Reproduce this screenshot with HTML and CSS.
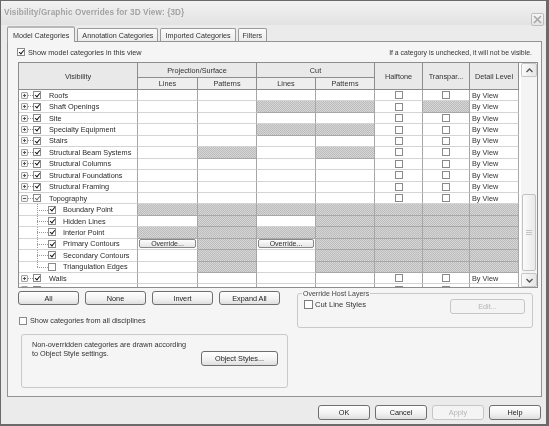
FILE: index.html
```html
<!DOCTYPE html>
<html>
<head>
<meta charset="utf-8">
<link rel="stylesheet" href="styles.css">
</head>
<body>
<div class="window">
  <div class="titlebar">
    <span class="title">Visibility/Graphic Overrides for 3D View: {3D}</span>
    <span class="close"><svg width="9" height="9" viewBox="0 0 9 9"><path d="M1 1L8 8M8 1L1 8" stroke="#a8a8a8" stroke-width="1.6"/></svg></span>
  </div>
  <div class="client">
    <div class="tabs">
      <span class="tab active">Model Categories</span>
      <span class="tab">Annotation Categories</span>
      <span class="tab">Imported Categories</span>
      <span class="tab">Filters</span>
    </div>
    <div class="panel">
      <div class="toprow">
        <label class="chk"><span class="cb on"></span>Show model categories in this view</label>
        <span class="hint">If a category is unchecked, it will not be visible.</span>
      </div>
      <div class="gridbox">
        <div class="grid">
          <div class="hd hv">Visibility</div>
          <div class="hd hps">Projection/Surface</div>
          <div class="hd hcut">Cut</div>
          <div class="hd hv6">Halftone</div>
          <div class="hd hv7">Transpar...</div>
          <div class="hd hv8">Detail Level</div>
          <div class="hd h2">Lines</div>
          <div class="hd h2">Patterns</div>
          <div class="hd h2">Lines</div>
          <div class="hd h2">Patterns</div>

          <div class="c vis"><span class="exp plus"></span><span class="hl"></span><span class="cb on"></span><span class="lbl">Roofs</span></div>
          <div class="c"></div><div class="c"></div><div class="c"></div><div class="c"></div>
          <div class="c ctr"><span class="cb"></span></div><div class="c ctr"><span class="cb"></span></div><div class="c dl">By View</div>

          <div class="c vis"><span class="exp plus"></span><span class="hl"></span><span class="cb on"></span><span class="lbl">Shaft Openings</span></div>
          <div class="c"></div><div class="c"></div><div class="c h"></div><div class="c h"></div>
          <div class="c ctr"><span class="cb"></span></div><div class="c h"></div><div class="c dl">By View</div>

          <div class="c vis"><span class="exp plus"></span><span class="hl"></span><span class="cb on"></span><span class="lbl">Site</span></div>
          <div class="c"></div><div class="c"></div><div class="c"></div><div class="c"></div>
          <div class="c ctr"><span class="cb"></span></div><div class="c ctr"><span class="cb"></span></div><div class="c dl">By View</div>

          <div class="c vis"><span class="exp plus"></span><span class="hl"></span><span class="cb on"></span><span class="lbl">Specialty Equipment</span></div>
          <div class="c"></div><div class="c"></div><div class="c h"></div><div class="c h"></div>
          <div class="c ctr"><span class="cb"></span></div><div class="c ctr"><span class="cb"></span></div><div class="c dl">By View</div>

          <div class="c vis"><span class="exp plus"></span><span class="hl"></span><span class="cb on"></span><span class="lbl">Stairs</span></div>
          <div class="c"></div><div class="c"></div><div class="c"></div><div class="c"></div>
          <div class="c ctr"><span class="cb"></span></div><div class="c ctr"><span class="cb"></span></div><div class="c dl">By View</div>

          <div class="c vis"><span class="exp plus"></span><span class="hl"></span><span class="cb on"></span><span class="lbl">Structural Beam Systems</span></div>
          <div class="c"></div><div class="c h"></div><div class="c"></div><div class="c h"></div>
          <div class="c ctr"><span class="cb"></span></div><div class="c ctr"><span class="cb"></span></div><div class="c dl">By View</div>

          <div class="c vis"><span class="exp plus"></span><span class="hl"></span><span class="cb on"></span><span class="lbl">Structural Columns</span></div>
          <div class="c"></div><div class="c"></div><div class="c"></div><div class="c"></div>
          <div class="c ctr"><span class="cb"></span></div><div class="c ctr"><span class="cb"></span></div><div class="c dl">By View</div>

          <div class="c vis"><span class="exp plus"></span><span class="hl"></span><span class="cb on"></span><span class="lbl">Structural Foundations</span></div>
          <div class="c"></div><div class="c"></div><div class="c"></div><div class="c"></div>
          <div class="c ctr"><span class="cb"></span></div><div class="c ctr"><span class="cb"></span></div><div class="c dl">By View</div>

          <div class="c vis"><span class="exp plus"></span><span class="hl"></span><span class="cb on"></span><span class="lbl">Structural Framing</span></div>
          <div class="c"></div><div class="c"></div><div class="c"></div><div class="c"></div>
          <div class="c ctr"><span class="cb"></span></div><div class="c ctr"><span class="cb"></span></div><div class="c dl">By View</div>

          <div class="c vis"><span class="exp"></span><span class="hl"></span><span class="cb on dim"></span><span class="lbl">Topography</span></div>
          <div class="c"></div><div class="c"></div><div class="c"></div><div class="c"></div>
          <div class="c ctr"><span class="cb"></span></div><div class="c ctr"><span class="cb"></span></div><div class="c dl">By View</div>

          <div class="c vis sub"><span class="tree"></span><span class="cb on"></span><span class="lbl">Boundary Point</span></div>
          <div class="c h"></div><div class="c h"></div><div class="c h"></div><div class="c h"></div>
          <div class="c h"></div><div class="c h"></div><div class="c h"></div>

          <div class="c vis sub"><span class="tree"></span><span class="cb on"></span><span class="lbl">Hidden Lines</span></div>
          <div class="c"></div><div class="c h"></div><div class="c"></div><div class="c h"></div>
          <div class="c h"></div><div class="c h"></div><div class="c h"></div>

          <div class="c vis sub"><span class="tree"></span><span class="cb on"></span><span class="lbl">Interior Point</span></div>
          <div class="c h"></div><div class="c h"></div><div class="c h"></div><div class="c h"></div>
          <div class="c h"></div><div class="c h"></div><div class="c h"></div>

          <div class="c vis sub"><span class="tree"></span><span class="cb on"></span><span class="lbl">Primary Contours</span></div>
          <div class="c ob"><span class="obtn">Override...</span></div><div class="c h"></div><div class="c ob"><span class="obtn">Override...</span></div><div class="c h"></div>
          <div class="c h"></div><div class="c h"></div><div class="c h"></div>

          <div class="c vis sub"><span class="tree"></span><span class="cb on"></span><span class="lbl">Secondary Contours</span></div>
          <div class="c"></div><div class="c h"></div><div class="c"></div><div class="c h"></div>
          <div class="c h"></div><div class="c h"></div><div class="c h"></div>

          <div class="c vis sub last"><span class="tree"></span><span class="cb"></span><span class="lbl">Triangulation Edges</span></div>
          <div class="c"></div><div class="c h"></div><div class="c"></div><div class="c h"></div>
          <div class="c h"></div><div class="c h"></div><div class="c h"></div>

          <div class="c vis"><span class="exp plus"></span><span class="hl"></span><span class="cb on"></span><span class="lbl">Walls</span></div>
          <div class="c"></div><div class="c"></div><div class="c"></div><div class="c"></div>
          <div class="c ctr"><span class="cb"></span></div><div class="c ctr"><span class="cb"></span></div><div class="c dl">By View</div>

          <div class="c vis"><span class="exp plus"></span><span class="hl"></span><span class="cb on"></span></div>
          <div class="c"></div><div class="c"></div><div class="c"></div><div class="c"></div>
          <div class="c ctr"><span class="cb"></span></div><div class="c ctr"><span class="cb"></span></div><div class="c dl"></div>
        </div>
        <div class="scroll">
          <span class="sbtn"><svg width="7" height="5" viewBox="0 0 7 5"><path d="M0.5 4L3.5 1L6.5 4" fill="none" stroke="#555" stroke-width="1.4"/></svg></span>
          <div class="track"><span class="thumb"><span class="grip"></span></span></div>
          <span class="sbtn"><svg width="7" height="5" viewBox="0 0 7 5"><path d="M0.5 1L3.5 4L6.5 1" fill="none" stroke="#555" stroke-width="1.4"/></svg></span>
        </div>
      </div>
      <div class="lower">
        <div class="leftcol">
          <div class="btnrow">
            <button class="btn">All</button>
            <button class="btn">None</button>
            <button class="btn">Invert</button>
            <button class="btn">Expand All</button>
          </div>
          <label class="chk disc"><span class="cb"></span>Show categories from all disciplines</label>
          <div class="note">
            <p>Non-overridden categories are drawn according<br>to Object Style settings.</p>
            <button class="btn obj">Object Styles...</button>
          </div>
        </div>
        <fieldset class="host">
          <legend>Override Host Layers</legend>
          <div class="hostrow">
            <label class="chk cls"><span class="cb big"></span>Cut Line Styles</label>
            <button class="btn edit" disabled>Edit...</button>
          </div>
        </fieldset>
      </div>
    </div>
    <div class="footer">
      <button class="btn fb">OK</button>
      <button class="btn fb">Cancel</button>
      <button class="btn fb" disabled>Apply</button>
      <button class="btn fb">Help</button>
    </div>
  </div>
</div>
</body>
</html>
```
FILE: styles.css
```css
html, body {
  margin: 0;
  padding: 0;
  width: 549px;
  height: 426px;
  overflow: hidden;
  background: #d8d8d8;
  font-family: "Liberation Sans", Arial, sans-serif;
  font-size: 7.3px;
  color: #2a2a2a;
}

.window {
  box-sizing: border-box;
  width: 549px;
  height: 426px;
  border: 1px solid #6a6a6a;
  border-right-width: 3px;
  border-bottom-width: 2px;
  background: #ebebeb;
  display: flex;
  flex-direction: column;
  filter: grayscale(1);
}

.titlebar {
  height: 24px;
  flex: none;
  display: flex;
  align-items: flex-start;
  justify-content: space-between;
  padding: 0 2px 0 3px;
  background: linear-gradient(#f2f2f2, #e2e2e2);
}

.title {
  margin-top: 7px;
  font-size: 8.2px;
  font-weight: bold;
  color: #a3a3a3;
  letter-spacing: 0.1px;
}

.close {
  margin-top: 12px;
  width: 13px;
  height: 13px;
  box-sizing: border-box;
  border: 1px solid #bdbdbd;
  border-radius: 2px;
  background: linear-gradient(#f7f7f7, #e4e4e4);
  display: flex;
  align-items: center;
  justify-content: center;
}

.client {
  flex: 1;
  display: flex;
  flex-direction: column;
  padding: 1px 4px 0 6px;
}

.tabs {
  display: flex;
  align-items: flex-end;
  height: 15px;
  gap: 2px;
  position: relative;
  z-index: 1;
}

.tab {
  height: 13px;
  box-sizing: border-box;
  padding: 0 4px;
  border: 1px solid #9a9a9a;
  border-bottom: none;
  border-radius: 2px 2px 0 0;
  background: linear-gradient(#fbfbfb, #ececec);
  display: flex;
  align-items: center;
  font-size: 7.2px;
  color: #333;
}

.tab.active {
  height: 16px;
  margin-bottom: -1px;
  background: #f5f5f5;
  padding: 0 5px;
  border-top: 2px solid #b8b8b8;
}

.panel {
  box-sizing: border-box;
  height: 356px;
  border: 1px solid #939393;
  background: #f5f5f5;
  padding: 4px 3px 0 10px;
}

.toprow {
  display: flex;
  justify-content: space-between;
  align-items: center;
  height: 12px;
  padding-right: 6px;
}

.chk {
  display: flex;
  align-items: center;
  gap: 3px;
  color: #333;
}

.toprow .chk {
  margin-left: -1px;
}

.hint {
  font-size: 6.9px;
  color: #333;
}

.cb {
  display: inline-block;
  position: relative;
  flex: none;
  width: 8px;
  height: 8px;
  box-sizing: border-box;
  border: 1px solid #8a8a8a;
  background: #fff;
}

.cb.on::after {
  content: "";
  position: absolute;
  left: 1.6px;
  top: -0.4px;
  width: 1.8px;
  height: 4px;
  border: solid #111;
  border-width: 0 1.6px 1.6px 0;
  transform: rotate(40deg);
}

.cb.dim::after {
  border-color: #6a6a6a;
}

.cb.big {
  width: 9px;
  height: 9px;
  border-color: #7c7c7c;
}

.gridbox {
  margin-top: 4px;
  width: 520px;
  height: 226px;
  box-sizing: border-box;
  border: 1px solid #8d8d8d;
  background: #fff;
  display: flex;
  gap: 2px;
  overflow: hidden;
}

.grid {
  width: 500px;
  flex: none;
  display: grid;
  grid-template-columns: 119px 60px 59px 59px 59px 48px 47px 49px;
  grid-template-rows: 15px 12px;
  grid-auto-rows: 11.45px;
  align-content: start;
}

.hd {
  box-sizing: border-box;
  border-right: 1px solid #8d8d8d;
  border-bottom: 1px solid #8d8d8d;
  background: #e9e9e9;
  display: flex;
  align-items: center;
  justify-content: center;
  color: #333;
}

.hv { grid-column: 1; grid-row: 1 / 3; }
.hps { grid-column: 2 / 4; grid-row: 1; }
.hcut { grid-column: 4 / 6; grid-row: 1; }
.hv6 { grid-column: 6; grid-row: 1 / 3; }
.hv7 { grid-column: 7; grid-row: 1 / 3; }
.hv8 { grid-column: 8; grid-row: 1 / 3; }
.h2 { background: #eeeeee; }

.c {
  box-sizing: border-box;
  border-right: 1px solid #a6a6a6;
  border-bottom: 1px solid #d4d4d4;
  background: #fff;
  min-height: 0;
  overflow: hidden;
}

.c.h {
  background: repeating-conic-gradient(#bcbcbc 0 25%, #d6d6d6 0 50%) 0 0 / 2px 2px;
  border-bottom-color: #a8a8a8;
}

.vis {
  display: flex;
  align-items: center;
  padding-left: 2px;
}

.exp {
  flex: none;
  position: relative;
  width: 7px;
  height: 7px;
  box-sizing: border-box;
  border: 1px solid #a4a4a4;
  border-radius: 1px;
  background: #f3f3f3;
}

.exp::before {
  content: "";
  position: absolute;
  left: 1px;
  right: 1px;
  top: 2px;
  height: 1px;
  background: #555;
}

.exp.plus::after {
  content: "";
  position: absolute;
  top: 1px;
  bottom: 1px;
  left: 2px;
  width: 1px;
  background: #555;
}

.hl {
  flex: none;
  width: 5px;
  height: 1px;
  background: repeating-linear-gradient(to right, #999 0 1px, transparent 1px 2px);
}

.lbl {
  margin-left: 8px;
  white-space: nowrap;
  color: #2a2a2a;
}

.vis.sub {
  padding-left: 18px;
}

.tree {
  flex: none;
  align-self: stretch;
  width: 11px;
  background:
    repeating-linear-gradient(to bottom, #999 0 1px, transparent 1px 2px) 0 0 / 1px 100% no-repeat,
    repeating-linear-gradient(to right, #999 0 1px, transparent 1px 2px) 0 50% / 100% 1px no-repeat;
  margin-bottom: -1px;
}

.vis.last .tree {
  background:
    repeating-linear-gradient(to bottom, #999 0 1px, transparent 1px 2px) 0 0 / 1px 50% no-repeat,
    repeating-linear-gradient(to right, #999 0 1px, transparent 1px 2px) 0 50% / 100% 1px no-repeat;
}

.vis.sub .lbl {
  margin-left: 7px;
}

.ctr {
  display: flex;
  align-items: center;
  justify-content: center;
}

.dl {
  display: flex;
  align-items: center;
  padding-left: 2px;
  color: #333;
}

.ob {
  display: flex;
  align-items: center;
  padding: 0 1px;
}

.obtn {
  flex: 1;
  height: 9px;
  box-sizing: border-box;
  border: 1px solid #888;
  border-radius: 2px;
  background: linear-gradient(#fdfdfd, #e4e4e4);
  display: flex;
  align-items: center;
  justify-content: center;
  font-size: 7px;
  color: #333;
}

.scroll {
  width: 16px;
  flex: none;
  display: flex;
  flex-direction: column;
  background: #f4f4f4;
}

.sbtn {
  height: 14px;
  flex: none;
  box-sizing: border-box;
  border: 1px solid #c6c6c6;
  border-radius: 2px;
  background: linear-gradient(to right, #fafafa, #e6e6e6);
  display: flex;
  align-items: center;
  justify-content: center;
}

.track {
  flex: 1;
  display: flex;
  flex-direction: column;
  padding: 0 1px;
}

.thumb {
  margin-top: 117px;
  height: 77px;
  box-sizing: border-box;
  border: 1px solid #c2c2c2;
  border-radius: 2px;
  background: linear-gradient(to right, #fbfbfb, #e9e9e9);
  display: flex;
  align-items: center;
  justify-content: center;
}

.grip {
  width: 6px;
  height: 5px;
  background: repeating-linear-gradient(to bottom, #c4c4c4 0 1px, transparent 1px 2px);
}

.lower {
  display: flex;
  margin-top: 3px;
}

.leftcol {
  width: 270px;
  flex: none;
  display: flex;
  flex-direction: column;
}

.btnrow {
  display: flex;
  gap: 6px;
}

.btn {
  font-family: "Liberation Sans", Arial, sans-serif;
  font-size: 7.3px;
  color: #222;
  height: 14px;
  box-sizing: border-box;
  padding: 0;
  border: 1px solid #6f6f6f;
  border-radius: 3px;
  background: linear-gradient(#ffffff, #f1f1f1 60%, #dedede);
  margin: 0;
}

.btn:disabled {
  color: #b5b5b5;
  border-color: #c6c6c6;
  background: #f4f4f4;
}

.btnrow .btn {
  width: 61px;
}

.disc {
  margin-top: 11px;
  margin-left: 1px;
}

.note {
  margin-top: 9px;
  margin-left: 3px;
  height: 54px;
  box-sizing: border-box;
  border: 1px solid #c9c9c9;
  border-radius: 3px;
  display: flex;
  align-items: flex-start;
  padding: 5px 9px 0 10px;
  justify-content: space-between;
}

.note p {
  margin: 0;
  line-height: 9px;
  color: #333;
}

.btn.obj {
  margin-top: 11px;
  width: 77px;
  height: 15px;
}

.host {
  margin: -1px 0 0 9px;
  padding: 0 7px 0 6px;
  width: 236px;
  height: 38px;
  box-sizing: border-box;
  border: 1px solid #c9c9c9;
  border-radius: 3px;
}

.host legend {
  padding: 0 1px;
  margin-left: -2px;
  color: #444;
  font-size: 7px;
}

.hostrow {
  display: flex;
  justify-content: space-between;
  align-items: flex-start;
  margin-top: 2px;
}

.cls {
  margin-top: 1px;
  gap: 2px;
  font-size: 7.6px;
}

.btn.edit {
  width: 75px;
  height: 15px;
  margin-top: 0;
}

.footer {
  display: flex;
  justify-content: flex-end;
  gap: 5px;
  margin-top: 8px;
  padding-right: 1px;
}

.btn.fb {
  width: 52px;
  height: 15px;
}
```
